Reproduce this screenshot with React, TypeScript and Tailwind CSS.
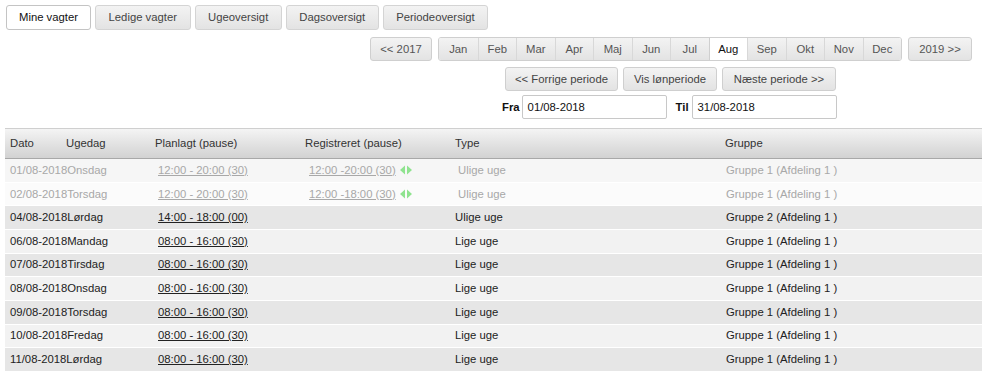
const tabs = ["Mine vagter", "Ledige vagter", "Ugeoversigt", "Dagsoversigt", "Periodeoversigt"]
const months = ["Jan", "Feb", "Mar", "Apr", "Maj", "Jun", "Jul", "Aug", "Sep", "Okt", "Nov", "Dec"]

type Row = {
  date: string
  day: string
  planned: string
  registered?: string
  type: string
  group: string
  past?: boolean
}

const rows: Row[] = [
  { date: "01/08-2018", day: "Onsdag", planned: "12:00 - 20:00 (30)", registered: "12:00 -20:00 (30)", type: "Ulige uge", group: "Gruppe 1 (Afdeling 1 )", past: true },
  { date: "02/08-2018", day: "Torsdag", planned: "12:00 - 20:00 (30)", registered: "12:00 -18:00 (30)", type: "Ulige uge", group: "Gruppe 1 (Afdeling 1 )", past: true },
  { date: "04/08-2018", day: "Lørdag", planned: "14:00 - 18:00 (00)", type: "Ulige uge", group: "Gruppe 2 (Afdeling 1 )" },
  { date: "06/08-2018", day: "Mandag", planned: "08:00 - 16:00 (30)", type: "Lige uge", group: "Gruppe 1 (Afdeling 1 )" },
  { date: "07/08-2018", day: "Tirsdag", planned: "08:00 - 16:00 (30)", type: "Lige uge", group: "Gruppe 1 (Afdeling 1 )" },
  { date: "08/08-2018", day: "Onsdag", planned: "08:00 - 16:00 (30)", type: "Lige uge", group: "Gruppe 1 (Afdeling 1 )" },
  { date: "09/08-2018", day: "Torsdag", planned: "08:00 - 16:00 (30)", type: "Lige uge", group: "Gruppe 1 (Afdeling 1 )" },
  { date: "10/08-2018", day: "Fredag", planned: "08:00 - 16:00 (30)", type: "Lige uge", group: "Gruppe 1 (Afdeling 1 )" },
  { date: "11/08-2018", day: "Lørdag", planned: "08:00 - 16:00 (30)", type: "Lige uge", group: "Gruppe 1 (Afdeling 1 )" },
]

const btn =
  "h-[24px] rounded-[3px] border border-[#cfcfcf] bg-gradient-to-b from-[#f3f3f3] to-[#e3e3e3] text-[#444] flex items-center justify-center whitespace-nowrap"

const cols = "grid grid-cols-[150px_150px_150px_270px_1fr]"

function Arrows() {
  return (
    <svg width="12" height="10" viewBox="0 0 12 10" className="ml-[4px]">
      <polygon points="0,5 5,0.5 5,9.5" fill="#8fe38f" />
      <polygon points="12,5 7,0.5 7,9.5" fill="#8fe38f" />
    </svg>
  )
}

export default function App() {
  return (
    <div className="w-[987px] h-[384px] bg-white text-[11.3px] text-[#333] font-['Liberation_Sans',Arial,sans-serif] pt-[5px]">
      <div className="flex gap-[4px] pl-[6px]">
        {tabs.map((t, i) => (
          <div
            key={t}
            className={
              i === 0
                ? "h-[25px] px-[12px] rounded-[3px] border border-[#c4c4c4] bg-white text-[#111] flex items-center whitespace-nowrap"
                : "h-[25px] px-[12.5px] rounded-[3px] border border-[#d4d4d4] bg-gradient-to-b from-[#f3f3f3] to-[#e3e3e3] text-[#444] flex items-center whitespace-nowrap"
            }
          >
            {t}
          </div>
        ))}
      </div>

      <div className="flex mt-[7px] ml-[370px] gap-[6px]">
        <div className={btn + " w-[62px] text-[#555]"}>&lt;&lt; 2017</div>
        <div className="flex h-[24px] rounded-[3px] border border-[#cfcfcf] overflow-hidden">
          {months.map((m) => (
            <div
              key={m}
              className={
                m === "Aug"
                  ? "w-[38.5px] h-full flex items-center justify-center bg-white text-[#111] border-l border-[#cfcfcf]"
                  : "w-[38.5px] h-full flex items-center justify-center bg-gradient-to-b from-[#f3f3f3] to-[#e3e3e3] text-[#555] border-l border-[#d8d8d8] first:border-l-0"
              }
            >
              {m}
            </div>
          ))}
        </div>
        <div className={btn + " w-[64px] text-[#555]"}>2019 &gt;&gt;</div>
      </div>

      <div className="flex mt-[6px] ml-[505px] gap-[5px]">
        <div className={btn + " w-[113px]"}>&lt;&lt; Forrige periode</div>
        <div className={btn + " w-[94px]"}>Vis lønperiode</div>
        <div className={btn + " w-[114px]"}>Næste periode &gt;&gt;</div>
      </div>

      <div className="flex items-center mt-[4px] ml-[502px]">
        <span className="font-bold text-[#111] mr-[2px]">Fra</span>
        <div className="w-[145px] h-[24px] border border-[#c8c8c8] rounded-[2px] flex items-center pl-[5px] text-[#111]">
          01/08-2018
        </div>
        <span className="font-bold text-[#111] ml-[9px] mr-[3px]">Til</span>
        <div className="w-[145px] h-[24px] border border-[#c8c8c8] rounded-[2px] flex items-center pl-[5px] text-[#111]">
          31/08-2018
        </div>
      </div>

      <div className="mx-[5px] mt-[9px] w-[977px]">
        <div className={cols + " h-[31px] items-center bg-gradient-to-b from-[#f4f4f4] to-[#d2d2d2] border-t border-[#cfcfcf] border-b border-b-[#a8a8a8] text-[#333]"}>
          <div className="flex pl-[5px]">
            <span className="w-[56px]">Dato</span>
            <span>Ugedag</span>
          </div>
          <span>Planlagt (pause)</span>
          <span>Registreret (pause)</span>
          <span>Type</span>
          <span>Gruppe</span>
        </div>
        {rows.map((r, i) => {
          const bg = r.past
            ? i === 0
              ? "bg-[#f6f6f6]"
              : "bg-[#fbfbfb]"
            : i % 2 === 0
              ? "bg-[#e6e6e6]"
              : "bg-[#f2f2f2]"
          const tc = r.past ? "text-[#a8a8a8]" : "text-[#222]"
          return (
            <div key={r.date} className={cols + " h-[23.67px] items-center border-b border-white " + bg + " " + tc}>
              <span className="pl-[5px] whitespace-nowrap">
                {r.date}
                {r.day}
              </span>
              <span className="pl-[3px] underline">{r.planned}</span>
              <span className="pl-[4px] flex items-center">
                {r.registered && (
                  <>
                    <span className="underline">{r.registered}</span>
                    <Arrows />
                  </>
                )}
              </span>
              <span className={r.past ? "pl-[3px]" : ""}>{r.type}</span>
              <span className="pl-[1px]">{r.group}</span>
            </div>
          )
        })}
      </div>
    </div>
  )
}
